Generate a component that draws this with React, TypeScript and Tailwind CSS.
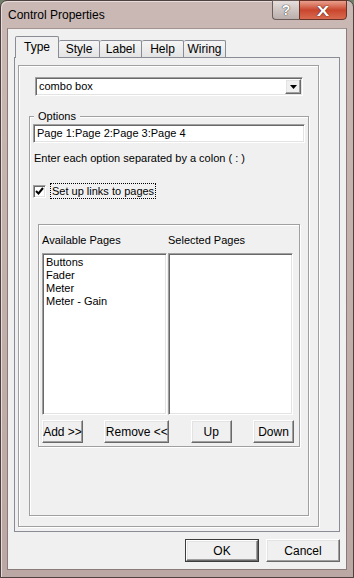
import React from "react";

const raised =
  "bg-[#f0f0f0] border border-t-white border-l-white border-r-[#696969] border-b-[#696969] shadow-[inset_-1px_-1px_0_#a0a0a0,inset_1px_1px_0_#e3e3e3]";
const sunken =
  "bg-white border border-t-[#a0a0a0] border-l-[#a0a0a0] border-r-white border-b-white shadow-[inset_1px_1px_0_#696969,inset_-1px_-1px_0_#e3e3e3]";
const etched = "border border-[#a0a0a0] shadow-[1px_1px_0_#fff,inset_1px_1px_0_#fff]";

const tabs = [
  { label: "Style", w: "w-[41px]" },
  { label: "Label", w: "w-[42px]" },
  { label: "Help", w: "w-[42px]" },
  { label: "Wiring", w: "w-[42px]" },
];

const pages = ["Buttons", "Fader", "Meter", "Meter - Gain"];

function Btn({ label, w }: { label: string; w: string }) {
  return (
    <button className={`${raised} ${w} h-[23px] flex items-center justify-center text-[12px] text-black`}>
      {label}
    </button>
  );
}

export default function App() {
  return (
    <div className="w-[354px] h-[578px] bg-[#6f7f6a] font-['Liberation_Sans',Arial,sans-serif] text-[11px] text-black">
      <div className="h-full flex flex-col rounded-t-[7px] border border-[#4d403e] bg-gradient-to-b from-[#c9b8b4] via-[#c2b0ac] to-[#bba8a4] shadow-[inset_1px_1px_0_#e6dcda]">
        {/* Title bar */}
        <div className="h-[27px] flex items-start">
          <div className="flex-1 pl-[7px] pt-[6px] text-[12px] leading-[16px]">Control Properties</div>
          <div className="flex mr-[6px] -mt-px">
            <div className="w-[27px] h-[20px] rounded-bl-[4px] border border-[#6a5d5a] border-r-0 bg-gradient-to-b from-[#e6dfdd] via-[#cfc5c2] to-[#b9aeab] flex items-center justify-center">
              <span className="text-[14px] font-bold text-white leading-none [text-shadow:0_0_1px_#333,0_0_1px_#333]">?</span>
            </div>
            <div className="w-[48px] h-[20px] rounded-br-[4px] border border-[#6a3327] bg-gradient-to-b from-[#e8a08e] via-[#c9452d] to-[#d86a4f] flex items-center justify-center">
              <span className="text-[15px] font-bold text-white leading-none scale-x-125 [text-shadow:0_0_1px_#4a1a12,0_0_1px_#4a1a12]">X</span>
            </div>
          </div>
        </div>

        {/* Client area */}
        <div className="flex-1 mx-[6px] mb-[7px] bg-[#f0f0f0] border border-[#8a7b78] border-t-[#a39491] flex flex-col pt-[7px] px-[6px] pb-[7px]">
          {/* Tab strip */}
          <div className="h-[21px] flex items-end pl-px">
            <div className="w-[44px] h-[22px] -mb-px relative z-10 bg-[#f0f0f0] border border-b-0 border-[#898c95] rounded-t-[2px] flex items-center justify-center pb-[2px] text-[12px]">
              Type
            </div>
            {tabs.map((t) => (
              <div
                key={t.label}
                className={`${t.w} h-[17px] bg-gradient-to-b from-[#f5f5f5] to-[#e4e4e4] border border-b-0 border-l-0 border-[#898c95] rounded-t-[2px] flex items-center justify-center text-[12px]`}
              >
                {t.label}
              </div>
            ))}
          </div>

          {/* Tab panel */}
          <div className="flex-1 border border-[#898c95] bg-[#f0f0f0] pl-[3px] pt-[7px] pr-[20px] pb-[4px] flex flex-col">
            <div className={`flex-1 ${etched} flex flex-col pl-[16px] pt-[11px] pr-[9px] pb-[10px]`}>
              {/* Combo */}
              <div className={`${sunken} w-[268px] h-[19px] flex items-center`}>
                <span className="flex-1 pl-[3px]">combo box</span>
                <div className={`${raised} w-[16px] h-[15px] mr-px flex items-center justify-center`}>
                  <svg width="7" height="4" viewBox="0 0 7 4">
                    <path d="M0 0h7L3.5 4z" fill="#000" />
                  </svg>
                </div>
              </div>

              {/* Options group */}
              <fieldset className={`flex-1 -ml-[6px] mt-[14px] ${etched} px-[3px] pb-[10px] flex flex-col`}>
                <legend className="ml-px px-[4px] leading-[13px] bg-[#f0f0f0]">Options</legend>
                <div className={`${sunken} h-[19px] mt-px flex items-center pl-[3px]`}>Page 1:Page 2:Page 3:Page 4</div>
                <div className="mt-[9px] leading-[13px] pl-px">Enter each option separated by a colon ( : )</div>

                <div className="mt-[18px] flex items-center">
                  <div className={`${sunken} w-[13px] h-[13px] flex items-center justify-center`}>
                    <svg width="9" height="9" viewBox="0 0 9 9">
                      <path d="M1 4l2.5 2.5L8 1" stroke="#000" strokeWidth="2" fill="none" />
                    </svg>
                  </div>
                  <span className="ml-[4px] px-px leading-[14px] border border-dotted border-black">Set up links to pages</span>
                </div>

                {/* Pages frame */}
                <div className={`mx-[5px] mt-[25px] ${etched} pl-[3px] pr-[5px] pt-[9px] pb-[3px]`}>
                  <div className="flex leading-[13px]">
                    <span className="w-[126px]">Available Pages</span>
                    <span>Selected Pages</span>
                  </div>
                  <div className="flex gap-px mt-[6px]">
                    <div className={`${sunken} w-[125px] h-[162px] pl-[3px] pt-[2px] leading-[13px]`}>
                      {pages.map((p) => (
                        <div key={p}>{p}</div>
                      ))}
                    </div>
                    <div className={`${sunken} w-[125px] h-[162px]`} />
                  </div>
                  <div className="flex justify-between mt-[5px]">
                    <Btn label="Add >>" w="w-[41px]" />
                    <Btn label="Remove <<" w="w-[65px]" />
                    <Btn label="Up" w="w-[41px]" />
                    <Btn label="Down" w="w-[41px]" />
                  </div>
                </div>
              </fieldset>
            </div>
          </div>

          {/* Dialog buttons */}
          <div className="flex justify-end gap-[7px] mt-[7px]">
            <button className="w-[74px] h-[23px] border border-[#3c3c3c] flex">
              <span className={`${raised} flex-1 flex items-center justify-center text-[12px]`}>OK</span>
            </button>
            <Btn label="Cancel" w="w-[74px]" />
          </div>
        </div>
      </div>
    </div>
  );
}
